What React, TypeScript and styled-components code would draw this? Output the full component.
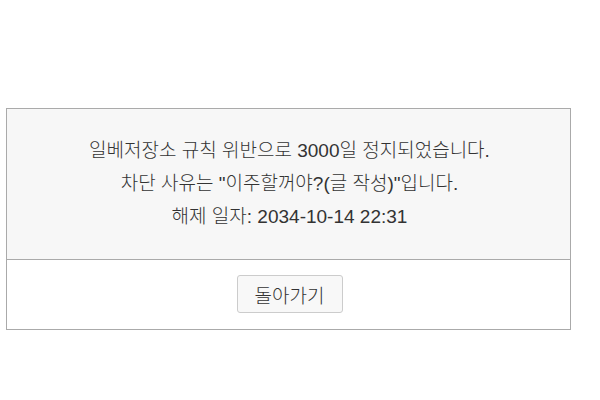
import React from "react";
import styled, { createGlobalStyle } from "styled-components";

const Global = createGlobalStyle`
  html, body { margin: 0; padding: 0; background: #fff; }
  body {
    font-family: "Liberation Sans", "Noto Sans CJK KR", sans-serif;
    color: #333;
  }
`;

const Page = styled.div`
  padding: 108px 29px 0 6px;
`;

const Panel = styled.div`
  width: 563px;
  border: 1px solid #aaa;
  background: #fff;
`;

const Message = styled.div`
  background: #f7f7f7;
  border-bottom: 1px solid #aaa;
  padding: 25px 10px 26px 12px;
  text-align: center;
  font-family: "Liberation Sans", "Noto Sans CJK KR", sans-serif;
  font-size: 19px;
  font-weight: 300;
  line-height: 33px;
  color: #333;
`;

const Line = styled.p`
  margin: 0;
`;

const Actions = styled.div`
  display: flex;
  justify-content: center;
  padding: 15px 0 16px 2px;
`;

const Button = styled.button`
  width: 106px;
  height: 38px;
  padding: 0;
  border: 1px solid #ccc;
  border-radius: 3px;
  background: #f8f8f8;
  font-family: "Liberation Sans", "Noto Sans CJK KR", sans-serif;
  font-size: 19px;
  font-weight: 300;
  color: #333;
  cursor: pointer;
`;

export default function App() {
  return (
    <>
      <Global />
      <Page>
        <Panel>
          <Message>
            <Line>일베저장소 규칙 위반으로 3000일 정지되었습니다.</Line>
            <Line>차단 사유는 "이주할꺼야?(글 작성)"입니다.</Line>
            <Line>해제 일자: 2034-10-14 22:31</Line>
          </Message>
          <Actions>
            <Button type="button">돌아가기</Button>
          </Actions>
        </Panel>
      </Page>
    </>
  );
}
